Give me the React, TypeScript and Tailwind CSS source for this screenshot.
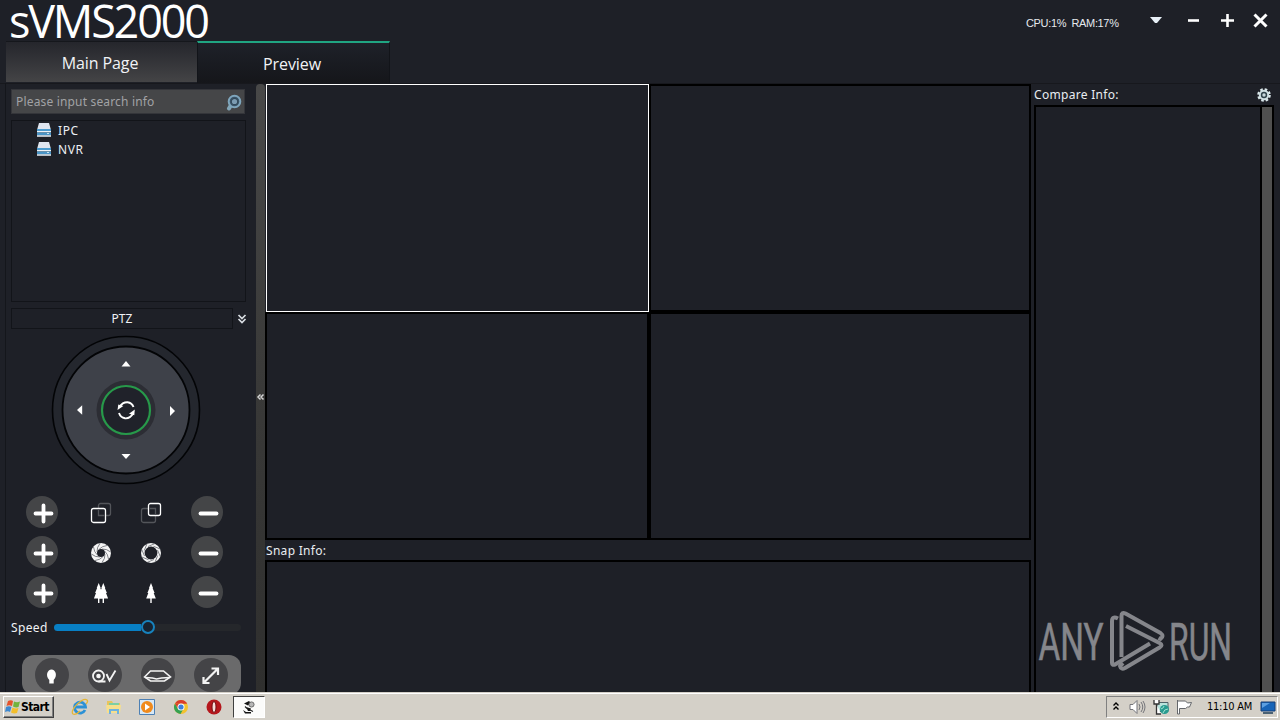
import type { ReactNode } from "react";

const devices = ["IPC", "NVR"];

function DeviceIcon() {
  return (
    <svg width="16" height="16" viewBox="0 0 16 16">
      <path d="M3 0h10l2 7H1z" fill="#dfe5ef" />
      <path d="M1 6h14v2H1z" fill="#4c9bce" />
      <path d="M1 8h14v1.500H1z" fill="#eef3f7" />
      <path d="M1 9.500h14v3H1z" fill="#4994c6" />
      <path d="M1 12.200h14v1.600H1z" fill="#dce4ec" />
      <path d="M11 10h2v1h-2z" fill="#c4e5f4" />
    </svg>
  );
}

function SearchIcon() {
  return (
    <svg width="16" height="19" viewBox="0 0 16 19">
      <path d="M5 13 3 16.500" stroke="#83a6b8" strokeWidth="4" strokeLinecap="round" />
      <circle cx="8.500" cy="9.500" r="5.800" fill="#3c566a" stroke="#7fa6bd" strokeWidth="2" />
      <circle cx="8.500" cy="9.500" r="3.200" fill="#7c9cb2" stroke="#33495a" strokeWidth="1.200" />
    </svg>
  );
}

function GearIcon() {
  return (
    <svg width="14" height="14" viewBox="-7 -7 14 14">
      <circle r="5.600" fill="none" stroke="#dce9ec" strokeWidth="2.400" strokeDasharray="2.500 1.898" />
      <circle r="5.200" fill="#cfdfe2" />
      <circle r="3.200" fill="#30434b" />
      <circle r="1.700" fill="#c7d8dc" />
    </svg>
  );
}

// Title bar with usage stats and window buttons
function TitleBar() {
  return (
    <header className="flex h-[41px] shrink-0 justify-between">
      <h1 className="ml-[9px] whitespace-nowrap pr-[4px] font-['Open_Sans',sans-serif] text-[45px] leading-[41px] tracking-[-2.2px] text-white">
        sVMS2000
      </h1>
      <div className="flex">
        <span className="mr-[30px] mt-[16px] w-[94px] whitespace-pre font-['Liberation_Sans',sans-serif] text-[11px] leading-[14px] tracking-[-0.35px] text-[#e6e9ee]">
          {"CPU:1%  RAM:17%"}
        </span>
        <svg className="mt-[10px]" width="130" height="22" viewBox="0 0 130 22" fill="none" stroke="#fff">
          <path d="M0 7h12l-5 6H5z" fill="#e8f0f7" stroke="none" />
          <path d="M38 10.500h11" strokeWidth="2.600" />
          <path d="M71 10.500h13M77.500 4v13" strokeWidth="2.600" />
          <path d="m104.500 4.500 12 12M116.500 4.500l-12 12" strokeWidth="3" />
        </svg>
      </div>
    </header>
  );
}

function TabBar() {
  return (
    <nav className="flex h-[42px] shrink-0 pl-[6px] font-['Open_Sans',sans-serif] text-[16px] text-[#f1f3f6]">
      <div className="flex h-[41px] w-[191px] items-center justify-center border-t border-[#15171c] bg-gradient-to-b from-[#25262c] to-[#444446] pr-[3px] pt-px tracking-[-0.1px]">
        Main Page
      </div>
      <div className="flex h-[42px] w-[193px] items-center justify-center border-x border-t-2 border-x-[#121419] border-t-[#20a582] bg-gradient-to-b from-[#1e2129] to-[#15161a] pr-[3px] pt-px tracking-[-0.1px]">
        Preview
      </div>
    </nav>
  );
}

function PtzWheel() {
  return (
    <svg className="mb-px ml-[45px] mt-[5px] shrink-0" width="150" height="152" viewBox="0 0 150 152">
      <circle cx="75" cy="76" r="73.500" fill="#24272e" stroke="#030406" strokeWidth="1.600" />
      <circle cx="75" cy="76" r="63.500" fill="#3e4149" stroke="#030406" strokeWidth="1.800" />
      <circle cx="75" cy="76" r="29.500" fill="#2c2d34" />
      <circle cx="75" cy="76" r="24" fill="#20222a" stroke="#27994a" strokeWidth="2.200" />
      <g fill="#fff">
        <path d="m75 27 4.500 5.500h-9z" />
        <path d="m75 125 4.500-5h-9z" />
        <path d="m26 76 5.200-4.800v9.600z" />
        <path d="m124 77-5-5v10z" />
        <path d="m66.500 76 .8-5.500 5 1.500z" />
        <path d="m83.800 75.500-.5 5.800-5.300-1.500z" />
      </g>
      <g fill="none" stroke="#fff" strokeWidth="1.900">
        <path d="M68.500 73q3-5 8-4.800 4.500.5 6 4.800" />
        <path d="M82 79.500q-3 5.300-8 4.800-4.500-.8-6-5.300" />
      </g>
    </svg>
  );
}

function RoundSign({ plus }: { plus?: boolean }) {
  return (
    <svg width="32" height="32" viewBox="0 0 32 32">
      <circle cx="16" cy="16" r="16" fill="#444547" />
      <path
        d={plus ? "M9.500 17.500h16M17.500 9.500v16" : "M9.500 17.500h16"}
        stroke="#fff"
        strokeWidth="3.800"
        strokeLinecap="round"
      />
    </svg>
  );
}

function ZoomIcon({ near }: { near?: boolean }) {
  return (
    <svg className="translate-y-px" width="22" height="22" viewBox="0 0 22 22" fill="none" strokeWidth="1.300">
      {near ? (
        <>
          <rect x="1.500" y="6.500" width="14" height="14" rx="2" stroke="#53555a" />
          <rect x="8.500" y="1.500" width="12" height="12" rx="2" fill="#1e2027" stroke="#fff" />
          <path d="M9.500 6.500h6v6" stroke="#53555a" />
        </>
      ) : (
        <>
          <rect x="8.500" y="1.500" width="12" height="12" rx="2" stroke="#53555a" />
          <rect x="1.500" y="6.500" width="14" height="14" rx="2" fill="#1e2027" stroke="#fff" />
          <path d="M8.500 7.500v6h6" stroke="#53555a" />
        </>
      )}
    </svg>
  );
}

function IrisIcon({ wide }: { wide?: boolean }) {
  return (
    <svg className="translate-y-px" width="22" height="22" viewBox="-11 -11 22 22" fill="none">
      <circle r={wide ? 8.2 : 7} stroke="#f5f5f5" strokeWidth={wide ? 3.6 : 6} />
      {[0, 45, 90, 135, 180, 225, 270, 315].map((a) => (
        <path key={a} d={wide ? "M-3 -6.500 4 -9.500" : "M-2 -3.600Q1-7 6-7.500"} transform={`rotate(${a})`} stroke="#55585e" strokeWidth="0.700" />
      ))}
    </svg>
  );
}

function TreeIcon({ pair }: { pair?: boolean }) {
  const tree = "M0-10 2-5H1.600L3.600 0H2.700L4.800 5.500H.7V10H-.7V5.500H-4.800L-2.700 0H-3.600L-1.600-5H-2z";
  return (
    <svg className="translate-y-px" width="22" height="22" viewBox="-11 -11 22 22" fill="#fff">
      {pair ? (
        <>
          <path d={tree} transform="translate(-2.300 0)" />
          <path d={tree} transform="translate(2.300 0)" />
        </>
      ) : (
        <path d={tree} />
      )}
    </svg>
  );
}

function ControlRow({ left, right }: { left: ReactNode; right: ReactNode }) {
  return (
    <div className="flex h-[40px] items-center">
      <RoundSign plus />
      <span className="ml-[32px]">{left}</span>
      <span className="ml-[28px]">{right}</span>
      <span className="ml-[29px]">
        <RoundSign />
      </span>
    </div>
  );
}

function RoundTool({ children }: { children: ReactNode }) {
  return (
    <div className="flex size-[34px] items-center justify-center rounded-full bg-[#444447]">
      <svg width="34" height="34" viewBox="-16.500 -17 34 34" fill="none" stroke="#f3f3f3" strokeWidth="1.800">
        {children}
      </svg>
    </div>
  );
}

function ToolStrip() {
  return (
    <div className="ml-[16px] mt-[17px] flex h-[40px] w-[219px] shrink-0 gap-[19px] rounded-[12px] bg-[#6a6a6b] pl-[13px] pt-[3px] *:shrink-0">
      <RoundTool>
        <path d="M-2.200 8.500V5C-6.500.5-4-5.500 0-5.500S6.500.5 2.200 5v3.500z" fill="#fff" stroke="none" />
      </RoundTool>
      <RoundTool>
        <circle cx="-6" cy="1" r="5.500" />
        <circle cx="-6" cy="1" r="1.400" fill="#fff" />
        <path d="M-6 6.500h7M2-1l3 6.500 6-10" />
      </RoundTool>
      <RoundTool>
        <path d="M-13 2-7-4H6L13 2 7 6H-7z" strokeWidth="1.600" />
        <path d="M-12 2.500-5 3-1 4 4 3 12 2.500" strokeWidth="1.300" />
      </RoundTool>
      <RoundTool>
        <path d="M-7 8 7-6M-7 2v6h6M1-6.500h6.500V0" strokeWidth="2.200" />
      </RoundTool>
    </div>
  );
}

function Sidebar() {
  return (
    <aside className="flex w-[250px] shrink-0 flex-col overflow-hidden">
      <div className="ml-[5px] mt-[6px] flex h-[25px] w-[234px] shrink-0 items-center justify-between border border-[#34353a] bg-[#454648] pl-[4px] pr-[2px] font-['Noto_Sans',sans-serif] text-[12px] text-[#a1a2a5]">
        <span className="tracking-[0.17px]">Please input search info</span>
        <SearchIcon />
      </div>
      <div className="ml-[5px] mt-[6px] h-[182px] w-[235px] shrink-0 border border-[#121419]">
        {devices.map((name) => (
          <div key={name} className="flex h-[19px] items-center gap-[6px] pl-[24px] font-['Noto_Sans',sans-serif] text-[12px] leading-[19px] tracking-[0.6px] text-[#edf0f4]">
            <DeviceIcon />
            {name}
          </div>
        ))}
      </div>
      <div className="ml-[5px] mt-[6px] flex h-[21px] shrink-0">
        <div className="w-[222px] border border-[#121419] text-center font-['Noto_Sans',sans-serif] text-[12px] leading-[19px] text-[#f0f2f5]">PTZ</div>
        <svg className="ml-[4px] mt-[6px]" width="10" height="11" viewBox="0 0 10 11" fill="none" stroke="#d8dce2" strokeWidth="1.700">
          <path d="m1.500 1 3.500 3.500L8.500 1M1.500 5 5 8.500 8.500 5" />
        </svg>
      </div>
      <PtzWheel />
      <div className="ml-[20px] mt-[5px] shrink-0">
        <ControlRow left={<ZoomIcon />} right={<ZoomIcon near />} />
        <ControlRow left={<IrisIcon />} right={<IrisIcon wide />} />
        <ControlRow left={<TreeIcon pair />} right={<TreeIcon />} />
      </div>
      <div className="ml-[5px] mt-[6px] flex h-[20px] shrink-0 items-center">
        <span className="w-[43px] font-['Noto_Sans',sans-serif] text-[12px] tracking-[0.35px] text-[#f0f2f5]">Speed</span>
        <div className="-mt-[2px] flex w-[187px] items-center rounded bg-[#25272b]">
          <div className="h-[7px] w-[87px] rounded-l bg-[#087fc4]" />
          <div className="-my-1 size-[14px] rounded-full border-[2.5px] border-[#1782bd] bg-[#182330]" />
        </div>
      </div>
      <ToolStrip />
    </aside>
  );
}

function VideoArea() {
  return (
    <main className="flex w-[766px] shrink-0 flex-col overflow-hidden pt-px">
      <div className="grid shrink-0 grid-cols-[384px_382px] grid-rows-[228px_228px]">
        <div className="ml-px border border-white" />
        <div className="border-2 border-black" />
        <div className="border-2 border-black" />
        <div className="border-2 border-black" />
      </div>
      <div className="h-[20px] shrink-0 pl-px font-['Noto_Sans',sans-serif] text-[12px] leading-[21px] tracking-[0.3px] text-[#e9edf1]">Snap Info:</div>
      <div className="grow border-2 border-b-0 border-black" />
    </main>
  );
}

function Watermark() {
  return (
    <svg className="absolute left-[1px] top-[498px] overflow-visible" width="200" height="74" viewBox="1037 605 200 74" fill="#85868b">
      <g fontFamily="Roboto, sans-serif" fontSize="51.500" stroke="#85868b" strokeWidth="0.600">
        <text x="1038.500" y="659.500" textLength="65" lengthAdjust="spacingAndGlyphs">ANY</text>
        <text x="1169" y="659.500" textLength="63" lengthAdjust="spacingAndGlyphs">RUN</text>
      </g>
      <g fill="none" stroke="#85868b" strokeWidth="4" strokeLinejoin="round">
        <path d="M1118 618.500q-6-3-6 3V663q0 2.500 3 1.500l35-21" />
        <path d="M1121.500 657v-41q0-4.500 4-2.500l35 19.500q4 3 0 6l-2-1" />
        <path d="m1126 626 33.500 17q4 2 0 4.500L1125 668q-4 2-5-2l3-3" />
      </g>
    </svg>
  );
}

function ComparePanel() {
  return (
    <section className="ml-[3px] flex w-[240px] shrink-0 flex-col">
      <div className="flex h-[22px] shrink-0 items-center justify-between pr-[3px] pt-[2px] font-['Noto_Sans',sans-serif] text-[12px] text-[#e9edf1]">
        <span className="tracking-[0.3px]">Compare Info:</span>
        <GearIcon />
      </div>
      <div className="relative flex grow justify-end border-2 border-b-0 border-black">
        <div className="w-[12px] border-l-2 border-black bg-[#50504f]" />
        <Watermark />
      </div>
    </section>
  );
}

function IeIcon() {
  return (
    <svg width="18" height="18" viewBox="0 0 18 18" fill="none">
      <path d="M14 12a5.500 5.500 0 1 1 .5-3H5" stroke="#2c91d6" strokeWidth="2.800" />
      <path d="M2 16C-2 12 12-1 16 2c1 1 0 3-1 4M2 16c2 1 5-1 7-3" stroke="#e5b637" strokeWidth="1.300" />
    </svg>
  );
}

function FolderIcon() {
  return (
    <svg width="18" height="18" viewBox="0 0 18 18">
      <path d="M2 3h5l1 2h7v10H2z" fill="#e8c45c" />
      <path d="M4 5h10v4H4z" fill="#7dcfa3" />
      <path d="M1 7h15l-1 8H2z" fill="#f7df8c" />
      <path d="M4 16v-5h10v5h-2v-3H6v3z" fill="#6fb2df" />
    </svg>
  );
}

function PlayerIcon() {
  return (
    <svg width="18" height="18" viewBox="0 0 18 18">
      <path d="M1.500 1.500h15v15h-15z" fill="#d7e8f6" stroke="#4d80b4" />
      <circle cx="9" cy="9" r="6" fill="#f08a1c" />
      <path d="m7 5.500 5 3.500-5 3.500z" fill="#fff" />
    </svg>
  );
}

function ChromeIcon() {
  return (
    <svg width="18" height="18" viewBox="0 0 18 18">
      <circle cx="9" cy="9" r="7" fill="#f3c22f" />
      <path d="M3 5.500A7 7 0 0 1 15.200 5.800H9z" fill="#d93b2c" />
      <path d="M3 5.400A7 7 0 0 0 8.500 16l3-5.200L6 11z" fill="#35a152" />
      <path d="M3 5.500 6 10.500 9 5.800z" fill="#d93b2c" />
      <circle cx="9" cy="9" r="3.500" fill="#fff" />
      <circle cx="9" cy="9" r="2.600" fill="#3c7fdc" />
    </svg>
  );
}

function OperaIcon() {
  return (
    <svg width="18" height="18" viewBox="0 0 18 18">
      <circle cx="9" cy="9" r="7.500" fill="#b5171c" />
      <ellipse cx="9" cy="9" rx="2" ry="5.500" fill="#f6dcd8" stroke="#700b10" strokeWidth="1" />
    </svg>
  );
}

function Taskbar() {
  return (
    <footer className="flex h-[28px] shrink-0 border-t border-[#d4d0c8] bg-[#d4d0c8] pl-[3px] pr-[2px] font-['DejaVu_Sans_Condensed','DejaVu_Sans',sans-serif] text-black shadow-[inset_0_1px_0_#fff]">
      <div className="mt-[3px] flex h-[22px] w-[51px] items-center border border-b-[#404040] border-l-white border-r-[#404040] border-t-white pl-px shadow-[inset_-1px_-1px_0_#808080]">
        <svg className="shrink-0" width="16" height="16" viewBox="0 0 16 16">
          <path d="M3 2q3-1.500 5 0L7 7Q4 5.500 1.500 7z" fill="#e5532b" />
          <path d="M9 2.500q3 1.500 6 0L13.500 8Q11 9 8 7.500z" fill="#72b33d" />
          <path d="M1 8q3-1.500 5.500 0L5 13Q3 11.500 0 13z" fill="#3c88d0" />
          <path d="M7.500 8.500q3 1.500 6 .5L12 14q-3 1-6-.5z" fill="#f3be2b" />
        </svg>
        <span className="text-[12px] font-bold tracking-[-0.6px]">Start</span>
      </div>
      <div className="ml-[17px] flex items-center gap-[15.5px] pt-px">
        <IeIcon />
        <FolderIcon />
        <PlayerIcon />
        <ChromeIcon />
        <OperaIcon />
      </div>
      <div className="ml-[10px] mt-[3px] flex h-[22px] w-[32px] items-center justify-center border border-b-white border-l-[#404040] border-r-white border-t-[#404040] bg-[#fbfbfa]">
        <svg width="16" height="16" viewBox="0 0 16 16">
          <path d="M3 4.500 8 2l2 2-3 2.500zM5 8l5 1.500-1 2.500H7zM2 11l3 2h5v1.500H4z" fill="#141414" />
          <circle cx="10.500" cy="5.500" r="2.600" fill="#b7b7b7" stroke="#555" strokeWidth="0.800" />
          <path d="M6 9.500 4 7.500M9 11l3 1.500" stroke="#222" strokeWidth="1.100" />
        </svg>
      </div>
      <div className="ml-auto mt-[3px] flex h-[22px] w-[172px] items-center border border-b-white border-l-[#808080] border-r-white border-t-[#808080] pl-[5px]">
        <svg width="8" height="10" viewBox="0 0 8 10" fill="none" stroke="#000" strokeWidth="1.400">
          <path d="m1.500 3.500 2.500-2.500 2.500 2.500M1.500 7.500 4 5l2.500 2.500" />
        </svg>
        <svg className="ml-[9px]" width="17" height="16" viewBox="0 0 17 16" fill="none" stroke="#74757a">
          <path d="M1 5.500h3l4-4v13l-4-4H1z" fill="#fff" />
          <path d="M10 5q2 3 0 6M12 3q3.500 5 0 10M14 2q4 6 0 12" />
        </svg>
        <svg className="ml-[7px]" width="17" height="17" viewBox="0 0 17 17">
          <path d="M4 3.500h11v9H4z" fill="#b9e3dc" stroke="#4f6269" />
          <path d="M1 1v4h5V1M3.500 5v10H8" fill="#fff" stroke="#333" strokeWidth="1.300" />
          <circle cx="11.500" cy="10.500" r="4.500" fill="#289b90" />
          <path d="M8 10q3-1 3-3M10 14q1-4 5-4" fill="none" stroke="#a4e2d1" />
        </svg>
        <svg className="ml-[6px]" width="17" height="17" viewBox="0 0 17 17" fill="#fff" stroke="#64676b">
          <path d="M1.500 1v14h2V9.500h6l2-1.500h2L15.500 3.500l-4 .5-2-2h-8z" />
        </svg>
        <span className="ml-[14px] w-[50px] whitespace-nowrap text-[11px] leading-[14px] tracking-[-0.25px]">11:10 AM</span>
        <svg className="ml-[3px]" width="16" height="15" viewBox="0 0 16 15">
          <path d="M1 2h14v9H1z" fill="#1764b7" stroke="#173e77" />
          <path d="M2 3h8L2 8z" fill="#5b9fe1" />
          <path d="M3 12h10v2H3z" fill="#4b6275" />
        </svg>
      </div>
    </footer>
  );
}

export default function App() {
  return (
    <div className="flex h-[720px] w-[1280px] flex-col overflow-hidden bg-[#1e2027]">
      <TitleBar />
      <TabBar />
      <div className="flex min-h-0 grow border-t border-[#17181d]">
        <div className="-mt-px flex min-h-0">
          <div className="w-[6px] shrink-0 border-r border-[#14161b]" />
          <Sidebar />
          {/* Splitter between device tree and video grid */}
          <div className="mt-px flex w-[9px] shrink-0 items-center rounded-t bg-gradient-to-b from-[#484848] via-[#393938] to-[#2f2f2e]">
            <svg className="mt-[18px]" width="9" height="8" viewBox="0 0 9 8" fill="none" stroke="#d5d5d5" strokeWidth="1.500">
              <path d="M4.500 1.500 2 4l2.500 2.500M7.500 1.500 5 4l2.500 2.500" />
            </svg>
          </div>
          <VideoArea />
          <ComparePanel />
          <div className="w-[6px] shrink-0" />
        </div>
      </div>
      <Taskbar />
    </div>
  );
}
